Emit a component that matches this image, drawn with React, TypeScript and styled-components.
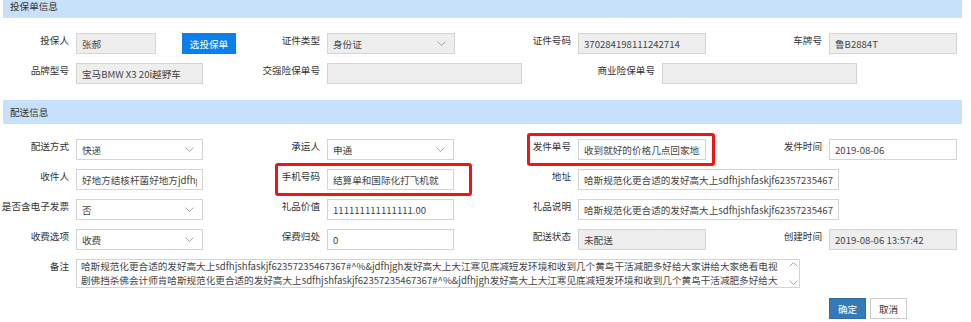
import styled, { createGlobalStyle } from 'styled-components';

const GlobalStyle = createGlobalStyle`
  body {
    margin: 0;
    background: #fff;
    font-family: "Noto Sans CJK SC", "Noto Sans", sans-serif;
    font-size: 9.6px;
    color: #333;
  }
`;

const Page = styled.div`
  width: 959px;
  padding-left: 3px;
  margin-top: -6px;
`;

const SectionTitle = styled.div<{ $gap: number }>`
  height: 24px;
  line-height: 24px;
  padding-left: 7px;
  background: #c8e1fa;
  color: #333;
  margin-bottom: ${p => p.$gap}px;
`;

const Row = styled.div<{ $cols?: string }>`
  display: grid;
  grid-template-columns: ${p => p.$cols || '251px 251px 251px 1fr'};
  margin-left: -3px;
  height: 21px;
  margin-bottom: 9px;
`;

const Field = styled.div<{ $span?: number }>`
  position: relative;
  display: flex;
  align-items: flex-start;
  grid-column: span ${p => p.$span || 1};
`;

const Label = styled.span`
  width: 69px;
  margin-right: 7px;
  text-align: right;
  line-height: 14px;
  white-space: nowrap;
  color: #333;
`;

const TextBox = styled.input<{ $w: number; $off?: boolean }>`
  box-sizing: border-box;
  width: ${p => p.$w}px;
  height: 21px;
  padding: 0 5px;
  border: 1px solid #d4d4d4;
  background: ${p => (p.$off ? '#eeeeee' : '#fff')};
  font-family: "Noto Sans CJK SC", "Noto Sans", sans-serif;
  font-size: 9.6px;
  color: #444;
  outline: none;
`;

const SelectBox = styled.div<{ $w: number; $off?: boolean }>`
  box-sizing: border-box;
  width: ${p => p.$w}px;
  height: 21px;
  padding: 0 8px 0 5px;
  border: 1px solid #d4d4d4;
  background: ${p => (p.$off ? '#eeeeee' : '#fff')};
  color: #444;
  display: flex;
  align-items: center;
  justify-content: space-between;
`;

const PickButton = styled.button`
  margin-left: 26px;
  width: 54px;
  height: 21px;
  border: none;
  background: #0b80ea;
  color: #fff;
  font-family: inherit;
  font-size: 9.6px;
  padding: 0;
`;

const Mark = styled.div<{ $left: number; $width: number }>`
  position: absolute;
  left: ${p => p.$left}px;
  width: ${p => p.$width}px;
  top: -6px;
  bottom: -6px;
  border: 3px solid #f01515;
  border-radius: 3px;
  box-sizing: border-box;
  pointer-events: none;
`;

const Memo = styled.div`
  box-sizing: border-box;
  width: 724px;
  height: 29px;
  border: 1px solid #d4d4d4;
  display: flex;
  color: #444;
`;

const MemoText = styled.div`
  flex: 1;
  overflow: hidden;
  padding: 0 0 0 4px;
  line-height: 13.5px;
`;

const MemoLine = styled.div`
  white-space: nowrap;
  overflow: hidden;
`;

const ScrollTrack = styled.div`
  width: 12px;
  display: flex;
  flex-direction: column;
  justify-content: space-between;
  align-items: center;
  padding: 2px 0;
  color: #aaa;
`;

const Actions = styled.div`
  display: flex;
  gap: 4px;
  padding-left: 826px;
  margin-top: 10px;
`;

const ActionButton = styled.button<{ $primary?: boolean }>`
  width: 37px;
  height: 21px;
  padding: 0;
  font-family: inherit;
  font-size: 9.6px;
  border: 1px solid ${p => (p.$primary ? '#2e6da4' : '#ccc')};
  background: ${p => (p.$primary ? '#337ab7' : '#fff')};
  color: ${p => (p.$primary ? '#fff' : '#333')};
`;

const Chevron = ({ up }: { up?: boolean }) => (
  <svg width="9" height="5" viewBox="0 0 9 5" fill="none">
    <path d={up ? 'M0.5 4.5L4.5 0.5L8.5 4.5' : 'M0.5 0.5L4.5 4.5L8.5 0.5'} stroke="#9a9a9a" strokeWidth="0.9" />
  </svg>
);

const Select = ({ w, value, off }: { w: number; value: string; off?: boolean }) => (
  <SelectBox $w={w} $off={off}>
    <span>{value}</span>
    <Chevron />
  </SelectBox>
);

const longText = '哈斯规范化更合适的发好高大上sdfhjshfaskjf62357235467367#^%&jdfhjgh';

export default function App() {
  return (
    <Page>
      <GlobalStyle />
      <SectionTitle $gap={15}>投保单信息</SectionTitle>
      <Row>
        <Field>
          <Label>投保人</Label>
          <TextBox $w={80} $off readOnly value="张郝" />
          <PickButton>选投保单</PickButton>
        </Field>
        <Field>
          <Label>证件类型</Label>
          <Select w={128} value="身份证" off />
        </Field>
        <Field>
          <Label>证件号码</Label>
          <TextBox $w={128} $off readOnly value="370284198111242714" />
        </Field>
        <Field>
          <Label>车牌号</Label>
          <TextBox $w={128} $off readOnly value="鲁B2884T" />
        </Field>
      </Row>
      <Row $cols="251px 335px 1fr" style={{ marginBottom: 16 }}>
        <Field>
          <Label>品牌型号</Label>
          <TextBox $w={127} $off readOnly value="宝马BMW X3 20i越野车" />
        </Field>
        <Field>
          <Label>交强险保单号</Label>
          <TextBox $w={195} $off readOnly value="" />
        </Field>
        <Field>
          <Label>商业险保单号</Label>
          <TextBox $w={195} $off readOnly value="" />
        </Field>
      </Row>

      <SectionTitle $gap={15}>配送信息</SectionTitle>
      <Row>
        <Field>
          <Label>配送方式</Label>
          <Select w={127} value="快递" />
        </Field>
        <Field>
          <Label>承运人</Label>
          <Select w={127} value="申通" />
        </Field>
        <Field>
          <Label>发件单号</Label>
          <TextBox $w={128} readOnly value="收到就好的价格几点回家地方就" />
          <Mark $left={25} $width={188} />
        </Field>
        <Field>
          <Label>发件时间</Label>
          <TextBox $w={128} readOnly value="2019-08-06" />
        </Field>
      </Row>
      <Row>
        <Field>
          <Label>收件人</Label>
          <TextBox $w={127} readOnly value="好地方结核杆菌好地方jdfhgjdfh" />
        </Field>
        <Field>
          <Label>手机号码</Label>
          <TextBox $w={127} readOnly value="结算单和国际化打飞机就" />
          <Mark $left={24} $width={197} />
        </Field>
        <Field $span={2}>
          <Label>地址</Label>
          <TextBox $w={261} readOnly value={longText} />
        </Field>
      </Row>
      <Row>
        <Field>
          <Label>是否含电子发票</Label>
          <Select w={127} value="否" />
        </Field>
        <Field>
          <Label>礼品价值</Label>
          <TextBox $w={127} readOnly value="111111111111111.00" />
        </Field>
        <Field $span={2}>
          <Label>礼品说明</Label>
          <TextBox $w={261} readOnly value={longText} />
        </Field>
      </Row>
      <Row>
        <Field>
          <Label>收费选项</Label>
          <Select w={127} value="收费" />
        </Field>
        <Field>
          <Label>保费归处</Label>
          <TextBox $w={127} readOnly value="0" />
        </Field>
        <Field>
          <Label>配送状态</Label>
          <TextBox $w={128} $off readOnly value="未配送" />
        </Field>
        <Field>
          <Label>创建时间</Label>
          <TextBox $w={128} $off readOnly value="2019-08-06 13:57:42" />
        </Field>
      </Row>
      <Row style={{ height: 29 }}>
        <Field $span={4}>
          <Label>备注</Label>
          <Memo>
            <MemoText>
              <MemoLine>
                哈斯规范化更合适的发好高大上sdfhjshfaskjf62357235467367#^%&amp;jdfhjgh发好高大上大江寒见底减短发环境和收到几个黄鸟干活减肥多好给大家讲给大家绝看电视
              </MemoLine>
              <MemoLine>
                剧佛挡杀佛会计师肯哈斯规范化更合适的发好高大上sdfhjshfaskjf62357235467367#^%&amp;jdfhjgh发好高大上大江寒见底减短发环境和收到几个黄鸟干活减肥多好给大
              </MemoLine>
            </MemoText>
            <ScrollTrack>
              <Chevron up />
              <Chevron />
            </ScrollTrack>
          </Memo>
        </Field>
      </Row>
      <Actions>
        <ActionButton $primary>确定</ActionButton>
        <ActionButton>取消</ActionButton>
      </Actions>
    </Page>
  );
}
